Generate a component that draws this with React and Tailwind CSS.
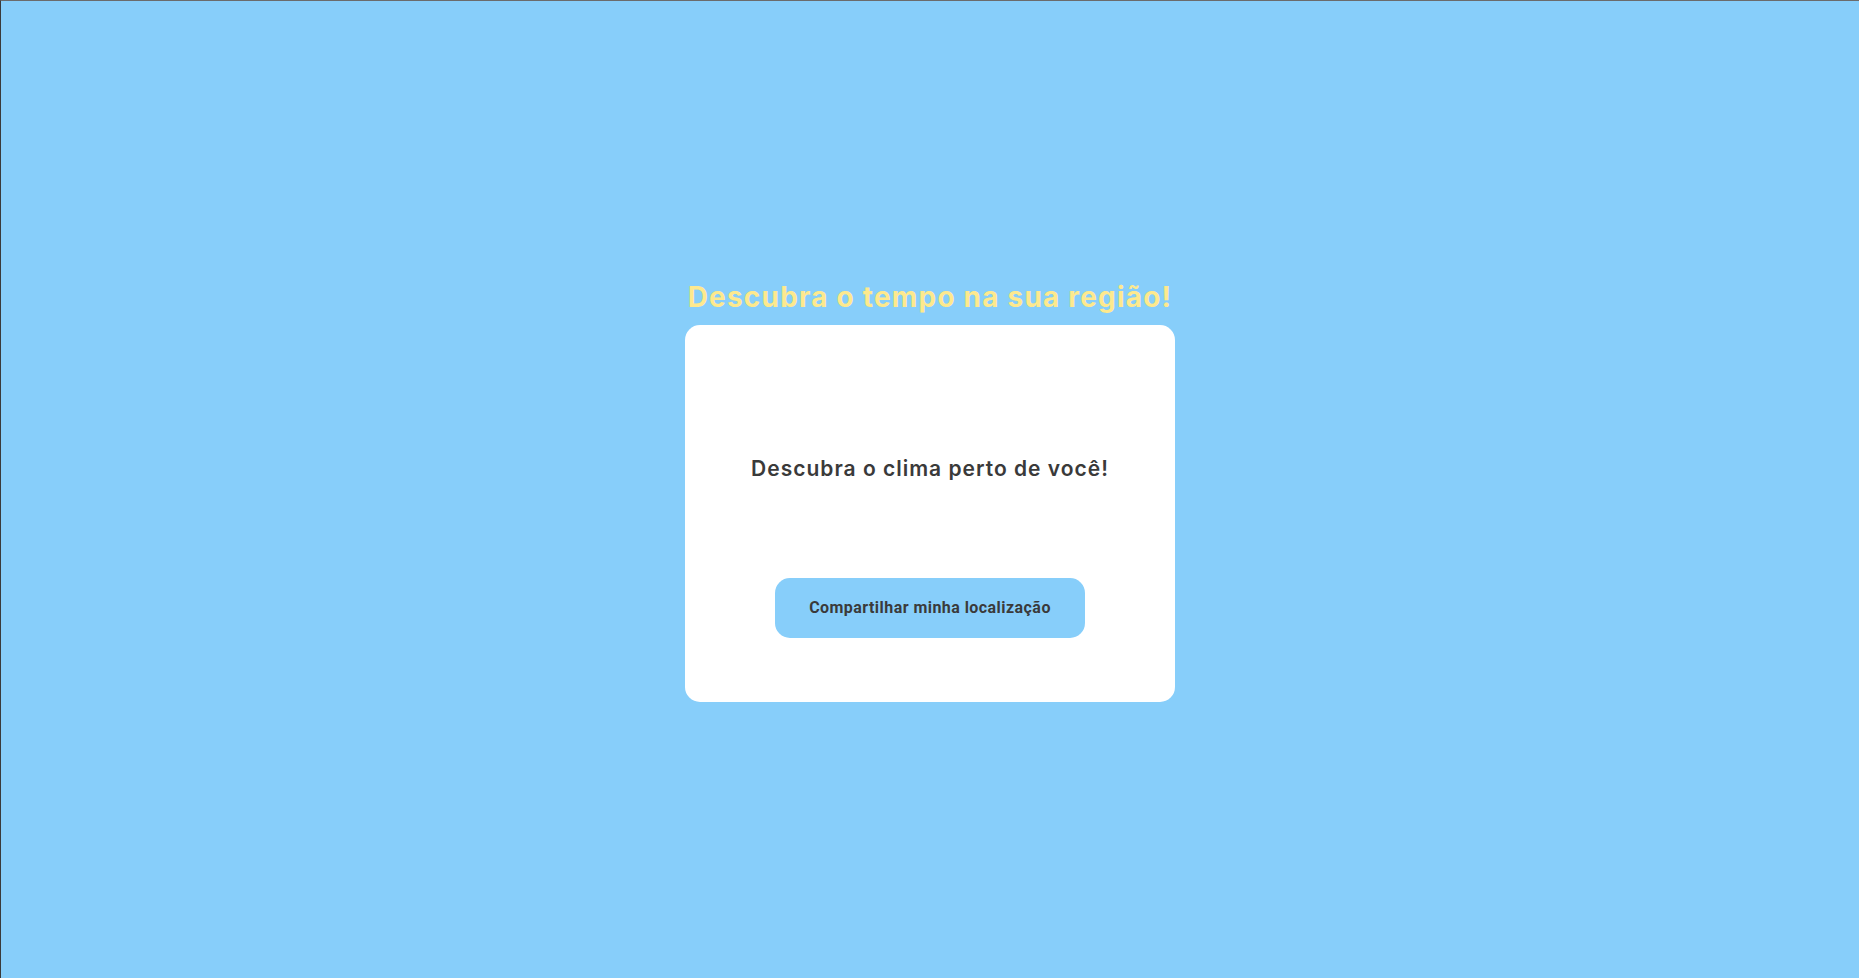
export default function App() {
  return (
    <div className="w-full h-[978px] bg-[#87cefa] border-t border-l border-t-[#6b6b6b] border-l-[#3a3a3a] flex flex-col items-center justify-center">
      <h1 className="font-['Inter','Open_Sans',sans-serif] text-[28px] leading-[40px] font-bold text-[#fde98e] mb-2 tracking-[1.2px]">
        Descubra o tempo na sua região!
      </h1>
      <div className="w-[490px] h-[377px] bg-white rounded-[15px] flex flex-col items-center pt-[128px] pb-[64px]">
        <h2 className="font-['Inter','Open_Sans',sans-serif] text-[21px] leading-[32px] font-semibold text-[#3a3a3a] tracking-[1px]">
          Descubra o clima perto de você!
        </h2>
        <button className="font-['Roboto',sans-serif] mt-auto w-[310px] h-[60px] rounded-[15px] bg-[#87cefa] text-[#3a3a3a] text-[16px] font-bold tracking-[0.45px]">
          Compartilhar minha localização
        </button>
      </div>
    </div>
  );
}
